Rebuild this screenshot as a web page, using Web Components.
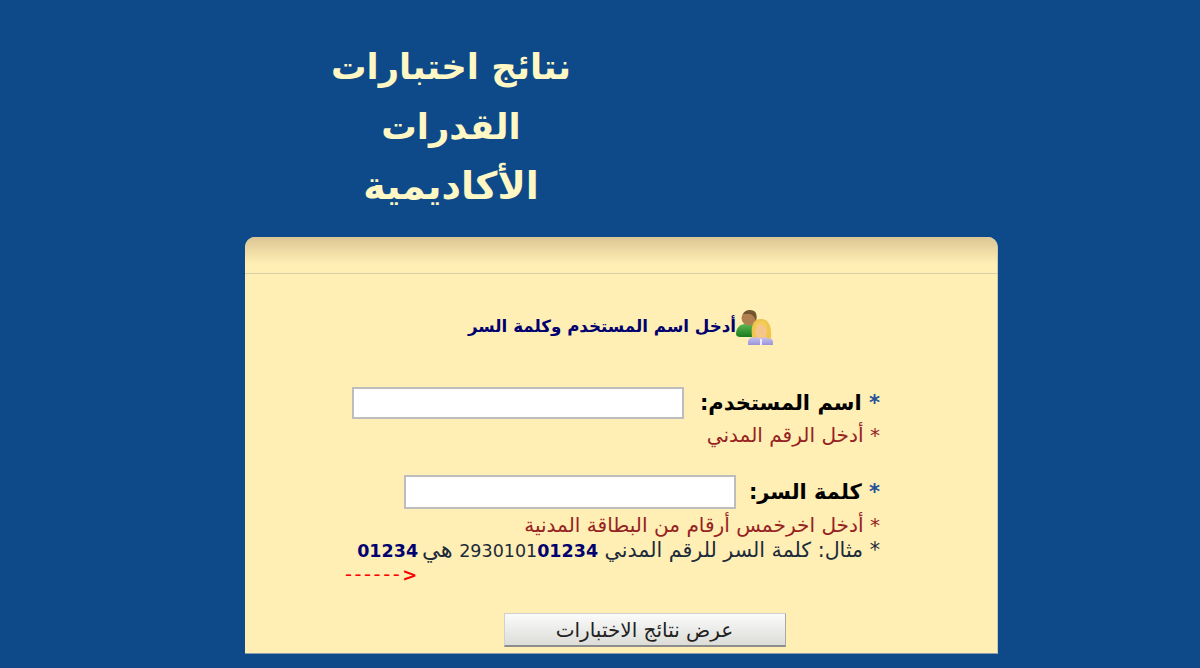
<!DOCTYPE html>
<html lang="ar"><head><meta charset="utf-8"><title>نتائج</title>
<style>
html,body{margin:0;padding:0;height:668px;overflow:hidden;background:#0e4a8a;font-family:"DejaVu Sans",sans-serif}
</style></head><body>
<results-page></results-page>
<script>
const F='"DejaVu Sans","Noto Sans",sans-serif';
class ResultsPage extends HTMLElement{constructor(){super();this.attachShadow({mode:'open'}).innerHTML=`
<style>:host{display:block;height:668px;overflow:hidden;font-family:${F}}
.wrap{padding-top:37px;display:flex;flex-direction:column}
.t3{font-size:38px;line-height:0}
</style><div class="wrap"><page-title>نتائج اختبارات<br>القدرات<br><span class="t3">الأكاديمية</span></page-title><login-card></login-card></div>`}}
class PageTitle extends HTMLElement{constructor(){super();this.attachShadow({mode:'open'}).innerHTML=`
<style>:host{display:block;width:300px;margin-left:301px;height:200px;text-align:center;color:#fff8c4;font:bold 35.4px/60px ${F}}</style><slot></slot>`}}
class UserIcon extends HTMLElement{constructor(){super();this.attachShadow({mode:'open'}).innerHTML=`
<style>:host{display:block;width:38px;height:37px;flex:none;margin-top:2px}svg{display:block}</style>
<svg width="38" height="37" viewBox="0 0 38 37">
<defs><linearGradient id="g" x1="0" y1="0" x2="0" y2="1"><stop offset="0" stop-color="#5cb84e"/><stop offset="1" stop-color="#1c7a20"/></linearGradient>
<linearGradient id="p" x1="0" y1="0" x2="0" y2="1"><stop offset="0" stop-color="#c9c4f0"/><stop offset="1" stop-color="#9a93da"/></linearGradient></defs>
<path d="M0 25c0-6 4-10 9-10h7c3 0 5 2 5 5v8H4c-2 0-4-1-4-3z" fill="url(#g)"/>
<circle cx="13" cy="9" r="7.5" fill="#b08050"/><path d="M7 5C9 1 14 0 18 2c3 2 3 6 2 10-1-3-3-6-6-7-3 0-5 0-7 0z" fill="#74552f"/>
<path d="M12 36v-3c0-3 3-5 6-5h9c5 0 10 1 10 5v3z" fill="url(#p)"/><rect x="24" y="30" width="2" height="6" fill="#eeecfb"/>
<path d="M16 28c-1-9 0-18 9-18s11 10 10 19c-2 1-4 1-5-1h-9c-1 1-3 1-5 0z" fill="#efc54e"/>
<ellipse cx="25" cy="22" rx="6" ry="7.5" fill="#f6c58a"/><path d="M19 20c0-6 3-8 7-8 3 0 5 3 5 6-3-1-6-2-8-4-1 2-2 5-4 6z" fill="#f2cd58"/>
</svg>`}}
class FormRow extends HTMLElement{constructor(){super();this.attachShadow({mode:'open'}).innerHTML=`
<style>:host{display:flex;align-items:center;gap:var(--g,16px);height:var(--h,32px)}
.l{font:bold 21px/32px ${F};color:#000;white-space:nowrap}
i{font-style:normal;color:#27509a}
input{box-sizing:border-box;width:332px;height:var(--h,32px);border:2px solid #bdbdbd;background:#fff;margin:0;padding:0;outline:0}</style>
<span class="l"><i>*</i> <slot></slot></span><input type="text">`}}
class HintLine extends HTMLElement{constructor(){super();this.attachShadow({mode:'open'}).innerHTML=`
<style>:host{display:block;height:25px;font:var(--s,20.1px)/25px ${F};color:var(--c,#962222);white-space:nowrap}</style><slot></slot>`}}
class ActionButton extends HTMLElement{constructor(){super();this.attachShadow({mode:'open'}).innerHTML=`
<style>:host{display:block;width:282px;height:34px;box-sizing:border-box}
button{display:block;width:100%;height:100%;box-sizing:border-box;margin:0;padding:0;font:20px/30px ${F};color:#222;border:1px solid #d0d0d0;border-bottom:2px solid #8d8d8d;border-right:1px solid #a8a8a8;background:linear-gradient(#fbfbfb,#dcdcd8)}</style>
<button type="button"><slot></slot></button>`}}
class LoginCard extends HTMLElement{constructor(){super();this.attachShadow({mode:'open'}).innerHTML=`
<style>:host{display:block;box-sizing:border-box;width:753px;height:417px;margin-left:245px;background:#ffefb5;border-radius:10px 10px 0 0;border-bottom:1px solid #8a9db0;border-right:1px solid #c9c9b0}
.head{height:36px;border-bottom:1px solid #d6cfa8;border-radius:10px 10px 0 0;background:linear-gradient(#dcc594,#ffefb5 75%)}
.title{display:flex;direction:rtl;justify-content:center;align-items:center;height:38px;margin-top:33px;font:bold 16.7px/24px ${F};color:#00006e}
.form{direction:rtl;padding-right:117px;margin-top:42px}
.gap{height:27px}
form-row+hint-line{margin-top:4px}
.arrow{direction:ltr;text-align:left;margin:2px 0 0 100px;color:#f00;font:19.5px/20px ${F};letter-spacing:2.5px;white-space:nowrap}
.arrow b{font-size:18px;letter-spacing:0}
.btn{display:flex;justify-content:center;margin-top:28px;padding-left:47px}
.d{font-size:17.5px;color:#1c2a3a;line-height:0}.d b{color:#000070}
.h{font-size:22.5px;line-height:0;margin-inline-end:4px}
</style>
<div class="head"></div>
<div class="title"><user-icon></user-icon><span>أدخل اسم المستخدم وكلمة السر</span></div>
<div class="form">
<form-row>اسم المستخدم:</form-row>
<hint-line>* أدخل الرقم المدني</hint-line>
<div class="gap"></div>
<form-row style="--h:34px;--g:13px">كلمة السر:</form-row>
<hint-line>* أدخل اخرخمس أرقام من البطاقة المدنية</hint-line>
<hint-line style="--c:#1c2a3a;--s:20.6px">* مثال: كلمة السر للرقم المدني <span class="d">2930101<b>01234</b></span> <span class="h">هي</span><span class="d"><b>01234</b></span></hint-line>
</div>
<div class="arrow">------<b>&gt;</b></div>
<div class="btn"><action-button>عرض نتائج الاختبارات</action-button></div>`}}
for(const [n,c] of Object.entries({'page-title':PageTitle,'user-icon':UserIcon,'form-row':FormRow,'hint-line':HintLine,'action-button':ActionButton,'login-card':LoginCard,'results-page':ResultsPage}))customElements.define(n,c);
</script></body></html>
